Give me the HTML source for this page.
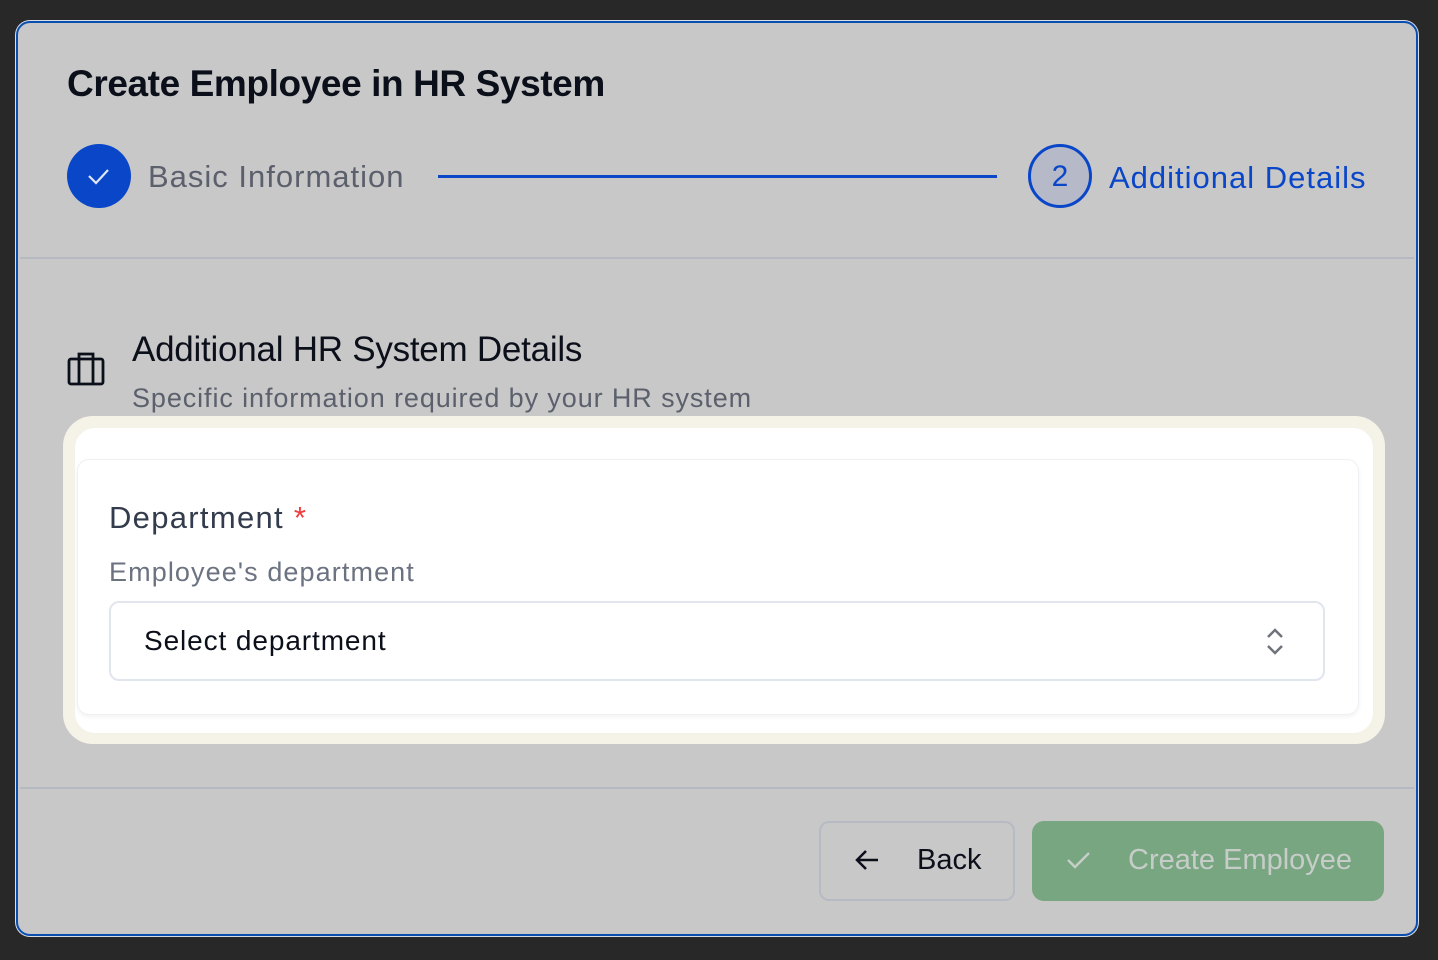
<!DOCTYPE html>
<html><head><style>
*{margin:0;padding:0;box-sizing:border-box}
body{width:1438px;height:960px;background:#282828;position:relative;overflow:hidden;font-family:"Liberation Sans",sans-serif}
.modal{position:absolute;left:16px;top:21px;width:1402px;height:915px;background:#c8c8c8;border:2px solid #0a4fb0;border-radius:14px;box-shadow:0 0 0 1px #d8dde6}
.abs{position:absolute}
.hdiv{position:absolute;left:2px;right:2px;height:2px;background:#b6bac0}
</style></head><body>
<div class="modal">
  <div class="abs" style="left:49px;top:40px;font-size:37px;font-weight:bold;color:#0b0f1a;letter-spacing:-0.4px">Create Employee in HR System</div>
  <div class="abs" style="left:49px;top:121px;width:64px;height:64px;border-radius:50%;background:#0a46c8"></div>
  <svg class="abs" style="left:67px;top:141px" width="28" height="24" viewBox="0 0 28 24"><path d="M4 12 L11 19 L23 6" fill="none" stroke="#dfe6f5" stroke-width="2.2"/></svg>
  <div class="abs" style="left:130px;top:136px;font-size:31px;color:#5b606c;letter-spacing:1px">Basic Information</div>
  <div class="abs" style="left:420px;top:152px;width:559px;height:3px;background:#0a46c8"></div>
  <div class="abs" style="left:1010px;top:121px;width:64px;height:64px;border-radius:50%;border:3px solid #0a46c8;background:#b6bac8;color:#0a46c8;font-size:30px;text-align:center;line-height:60px">2</div>
  <div class="abs" style="left:1091px;top:137px;font-size:31px;color:#0a46c8;letter-spacing:1px">Additional Details</div>
  <div class="hdiv" style="top:234px"></div>
  <svg class="abs" style="left:49px;top:328px" width="40" height="36" viewBox="0 0 40 36"><rect x="2" y="8" width="34" height="25" rx="2" fill="none" stroke="#0b0f1a" stroke-width="2.8"/><path d="M12 8 V3 H26 V8 M12 8 V33 M26 8 V33" fill="none" stroke="#0b0f1a" stroke-width="2.8"/></svg>
  <div class="abs" style="left:114px;top:307px;font-size:35px;color:#0b0f1a;letter-spacing:-0.25px">Additional HR System Details</div>
  <div class="abs" style="left:114px;top:360px;font-size:27px;color:#5b606c;letter-spacing:0.9px">Specific information required by your HR system</div>
  <div class="abs" style="left:45px;top:393px;width:1322px;height:328px;background:#f5f3e8;border-radius:30px"></div>
  <div class="abs" style="left:57px;top:405px;width:1298px;height:305px;background:#fff;border-radius:20px"></div>
  <div class="abs" style="left:59px;top:436px;width:1282px;height:256px;border:1.5px solid #eff0f3;border-radius:12px;box-shadow:0 2px 4px rgba(0,0,0,.05)"></div>
  <div class="abs" style="left:91px;top:477px;font-size:31px;color:#333c4c;letter-spacing:1.3px">Department <span style="color:#ef3b3b">*</span></div>
  <div class="abs" style="left:91px;top:534px;font-size:27px;color:#6b7280;letter-spacing:1.1px">Employee's department</div>
  <div class="abs" style="left:91px;top:578px;width:1216px;height:80px;border:2px solid #e1e5ee;border-radius:10px"></div>
  <div class="abs" style="left:126px;top:602px;font-size:28px;color:#0b0f1a;letter-spacing:0.9px">Select department</div>
  <svg class="abs" style="left:1245px;top:604px" width="24" height="30" viewBox="0 0 24 30"><path d="M5 10 L12 3 L19 10 M5 19 L12 26 L19 19" fill="none" stroke="#6f737b" stroke-width="2.5"/></svg>
  <div class="hdiv" style="top:764px"></div>
  <div class="abs" style="left:801px;top:798px;width:196px;height:80px;border:2px solid #b6bac2;border-radius:10px"></div>
  <svg class="abs" style="left:836px;top:823px" width="28" height="28" viewBox="0 0 28 28"><path d="M24 14 H4 M12 5 L3 14 L12 23" fill="none" stroke="#0b0f1a" stroke-width="2.5"/></svg>
  <div class="abs" style="left:899px;top:821px;font-size:29px;color:#0b0f1a">Back</div>
  <div class="abs" style="left:1014px;top:798px;width:352px;height:80px;background:#78a681;border-radius:12px"></div>
  <svg class="abs" style="left:1046px;top:823px" width="30" height="28" viewBox="0 0 30 28"><path d="M4 14 L11 21 L25 7" fill="none" stroke="#c6cec8" stroke-width="2.4"/></svg>
  <div class="abs" style="left:1110px;top:821px;font-size:29px;color:#c6cdc8">Create Employee</div>
</div>
</body></html>
